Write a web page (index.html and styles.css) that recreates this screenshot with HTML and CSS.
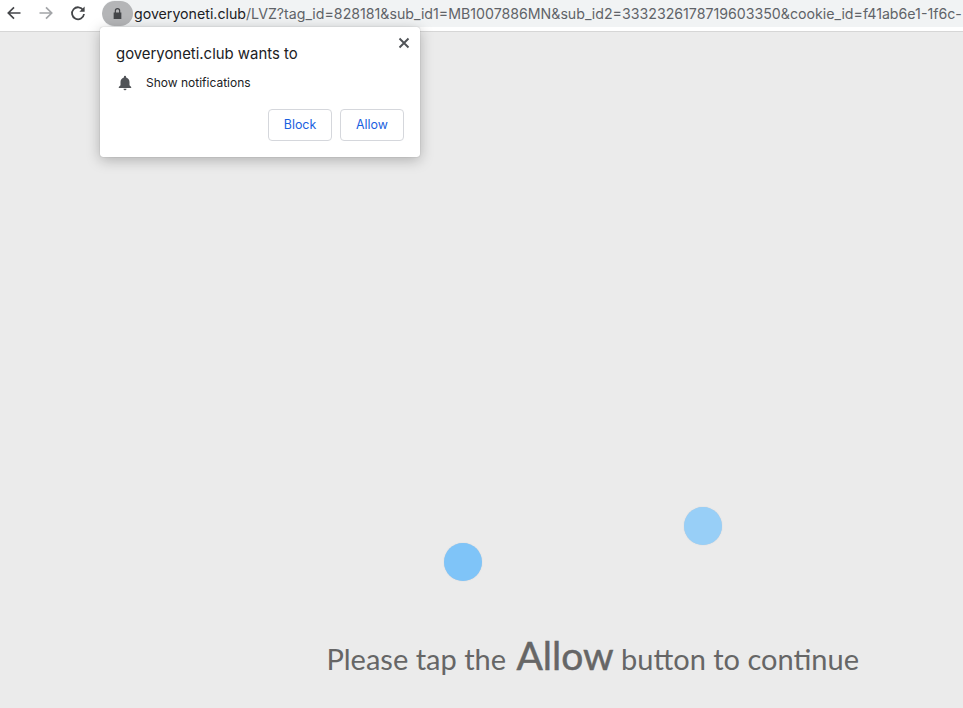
FILE: index.html
```html
<!DOCTYPE html>
<html lang="en">
<head>
<meta charset="utf-8">
<title>goveryoneti.club</title>
<link rel="stylesheet" href="styles.css">
</head>
<body>
<header class="toolbar">
  <nav class="nav-buttons">
    <svg class="nav-icon" viewBox="0 0 16 16" width="16" height="16"><path d="M14.500 8H2.500M8 2.300 2.300 8 8 13.700" fill="none" stroke="#444649" stroke-width="1.700"/></svg>
    <svg class="nav-icon" viewBox="0 0 16 16" width="16" height="16"><path d="M1.500 8h12M8 2.300 13.700 8 8 13.700" fill="none" stroke="#a3a5a8" stroke-width="1.700"/></svg>
    <svg class="nav-icon" viewBox="0 0 16 16" width="16" height="16"><path d="M13.200 5.200A6 6 0 1 0 14 9" fill="none" stroke="#444649" stroke-width="1.800"/><path d="M14.600 1.600v5.200H9.400z" fill="#444649"/></svg>
  </nav>
  <div class="omnibox">
    <span class="lock-chip">
      <svg viewBox="0 0 12 14" width="11" height="13"><path d="M3 6V4a3 3 0 0 1 6 0v2h1.200v7H1.800V6zM4.300 6h3.400V4a1.700 1.700 0 0 0-3.400 0z" fill="#444649" fill-rule="evenodd"/></svg>
    </span>
    <span class="url"><span class="host">goveryoneti.club</span><span class="path">/LVZ?tag_id=828181&amp;sub_id1=MB1007886MN&amp;sub_id2=3332326178719603350&amp;cookie_id=f41ab6e1-1f6c-</span></span>
  </div>
</header>

<main class="page">
  <span class="dot dot-left"></span>
  <span class="dot dot-right"></span>
  <p class="prompt">Please tap the <strong class="prompt-strong">Allow</strong> button to continue</p>
</main>

<aside class="permission">
  <div class="permission-head">
    <span class="permission-title">goveryoneti.club wants to</span>
    <svg class="close" viewBox="0 0 12 12" width="12" height="12"><path d="M1.500 1.500l9 9M10.500 1.500l-9 9" stroke="#505357" stroke-width="1.900" fill="none"/></svg>
  </div>
  <div class="permission-row">
    <svg viewBox="0 0 14 16" width="14" height="16"><path d="M7 .800a1.100 1.100 0 0 1 1.100 1.100v.5C10.300 3 11.500 4.800 11.500 7v3.300L13.200 12v1H.800v-1l1.700-1.700V7c0-2.200 1.200-4 3.400-4.600v-.5A1.100 1.100 0 0 1 7 .800zM5.500 13.800h3a1.500 1.500 0 0 1-3 0z" fill="#505357"/></svg>
    <span class="permission-text">Show notifications</span>
  </div>
  <div class="permission-actions">
    <button class="action" type="button">Block</button>
    <button class="action" type="button">Allow</button>
  </div>
</aside>
</body>
</html>
```
FILE: styles.css
```css
* { box-sizing: border-box; }
html, body { height: 100%; }
body {
  margin: 0;
  display: flex;
  flex-direction: column;
  overflow: hidden;
  background: #ebebeb;
  font-family: "Inter", "Roboto", "Liberation Sans", sans-serif;
}
.toolbar {
  flex: none;
  height: 32px;
  display: flex;
  align-items: flex-start;
  background: #ffffff;
  border-bottom: 1px solid #d6d6d6;
}
.nav-buttons {
  display: flex;
  gap: 16px;
  padding: 5px 0 0 6px;
}
.omnibox {
  flex: 1;
  min-width: 0;
  height: 27px;
  margin-left: 16px;
  display: flex;
  align-items: center;
  gap: 1px;
  background: #f1f3f4;
  border-radius: 13px 0 0 13px;
  overflow: hidden;
}
.lock-chip {
  flex: none;
  width: 31px;
  height: 25px;
  display: flex;
  align-items: center;
  justify-content: center;
  background: #b4b5b7;
  border-radius: 13px;
}
.url {
  font-size: 14.180px;
  white-space: nowrap;
  color: #5f6368;
}
.host { color: #202124; }
.page {
  position: relative;
  flex: 1;
  display: flex;
  align-items: flex-end;
  justify-content: flex-end;
  padding: 0 104px 29px 0;
}
.dot {
  position: absolute;
  width: 38px;
  height: 38px;
  border-radius: 50%;
  box-shadow: 0 0 1px rgba(150, 170, 190, 0.6);
}
.dot-left { left: 444px; top: 511px; background: #7fc4f8; }
.dot-right { left: 684px; top: 475px; background: #98cff7; }
.prompt {
  margin: 0;
  font-family: "Lato", "Open Sans", sans-serif;
  font-size: 29px;
  line-height: 40px;
  color: #666666;
  white-space: nowrap;
}
.prompt-strong {
  margin-left: 3px;
  font-size: 39px;
  font-weight: 400;
  -webkit-text-stroke: 0.5px #666666;
}
.permission {
  position: absolute;
  left: 100px;
  top: 27px;
  width: 320px;
  height: 130px;
  padding: 16px;
  background: #ffffff;
  border-radius: 3px;
  box-shadow: 0 3px 14px rgba(0, 0, 0, 0.26), 0 0 1px rgba(0, 0, 0, 0.35);
  display: flex;
  flex-direction: column;
}
.permission-head {
  display: flex;
  justify-content: space-between;
  align-items: flex-start;
}
.permission-title {
  font-size: 14.900px;
  line-height: 22px;
  color: #202124;
}
.close {
  margin-top: -6px;
  margin-right: -6px;
}
.permission-row {
  display: flex;
  align-items: center;
  gap: 14px;
  margin-top: 10px;
  font-size: 12px;
  line-height: 16px;
  color: #202124;
  padding-left: 2px;
}
.permission-actions {
  margin-top: auto;
  display: flex;
  justify-content: flex-end;
  gap: 8px;
}
.action {
  width: 64px;
  height: 32px;
  padding: 0 0 2px;
  background: #ffffff;
  border: 1px solid #d5d7dc;
  border-radius: 4px;
  color: #1a5fe0;
  font-family: inherit;
  font-size: 12.400px;
}
```
